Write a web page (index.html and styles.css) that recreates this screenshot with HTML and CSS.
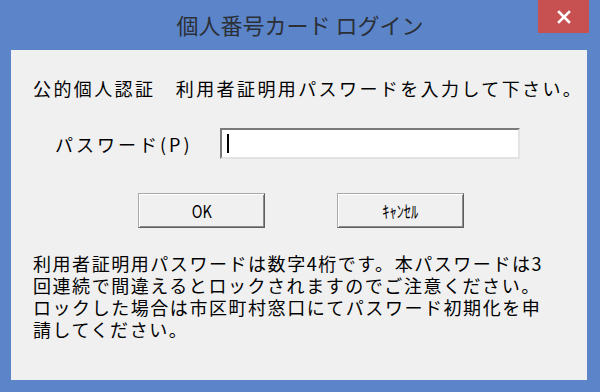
FILE: index.html
```html
<!DOCTYPE html>
<html lang="ja">
<head>
<meta charset="utf-8">
<link rel="stylesheet" href="styles.css">
</head>
<body>
<div class="window">
  <div class="titlebar">
    <div class="title">個人番号カード ログイン</div>
    <div class="close">
      <svg width="14" height="14" viewBox="0 0 14 14"><path d="M2 2 L12 12 M12 2 L2 12" stroke="#fff" stroke-width="2.6" stroke-linecap="square"/></svg>
    </div>
  </div>
  <div class="content">
    <p class="lead">公的個人認証　利用者証明用パスワードを入力して下さい。</p>
    <div class="pwrow">
      <span class="label">パスワード(P)</span>
      <div class="input"><span class="caret"></span></div>
    </div>
    <div class="buttons">
      <div class="btn"><span class="btn-text">OK</span></div>
      <div class="btn"><span class="btn-text">ｷｬﾝｾﾙ</span></div>
    </div>
    <p class="note">利用者証明用パスワードは数字4桁です。本パスワードは3<br>回連続で間違えるとロックされますのでご注意ください。<br>ロックした場合は市区町村窓口にてパスワード初期化を申<br>請してください。</p>
  </div>
</div>
</body>
</html>
```
FILE: styles.css
```css
html, body {
  margin: 0;
  padding: 0;
}
body {
  width: 600px;
  height: 392px;
  background: #5b84c9;
  overflow: hidden;
  font-family: "Noto Sans CJK JP", "Noto Sans", sans-serif;
  color: #000;
}
.window {
  display: flex;
  flex-direction: column;
  height: 392px;
}
.titlebar {
  position: relative;
  height: 50px;
  display: flex;
  align-items: center;
  justify-content: center;
}
.title {
  font-size: 22px;
  color: #2b2f36;
  letter-spacing: 0;
  margin-top: -2px;
}
.close {
  position: absolute;
  top: 0;
  right: 11px;
  width: 51px;
  height: 33px;
  background: #c75050;
  display: flex;
  align-items: center;
  justify-content: center;
}
.content {
  margin: 0 13px 0 11px;
  height: 330px;
  background: #f0f0f0;
  box-sizing: border-box;
  padding: 26px 0 0 22px;
  font-size: 18px;
}
.lead {
  margin: 0;
  line-height: 24px;
  letter-spacing: 2.4px;
}
.pwrow {
  display: flex;
  align-items: center;
  margin-top: 28px;
  padding-left: 22px;
}
.label {
  width: 165px;
  letter-spacing: 3px;
}
.input {
  width: 291px;
  height: 27px;
  background: #fff;
  border-top: 2px solid #7a7a7a;
  border-left: 2px solid #7a7a7a;
  border-right: 2px solid #e3e3e3;
  border-bottom: 2px solid #e3e3e3;
  display: flex;
  align-items: center;
  padding-left: 5px;
  box-sizing: content-box;
}
.caret {
  width: 2px;
  height: 19px;
  background: #000;
}
.buttons {
  display: flex;
  margin-top: 34px;
  padding-left: 105px;
  gap: 72px;
}
.btn {
  width: 127px;
  height: 35px;
  box-sizing: border-box;
  background: #f0f0f0;
  border: 1px solid #a9a9a9;
  border-right-color: #5e5e5e;
  border-bottom-color: #5e5e5e;
  box-shadow: inset 1px 1px 0 #fff, inset -1px -1px 0 #8c8c8c;
  display: flex;
  align-items: center;
  justify-content: center;
}
.btn-text {
  display: inline-block;
  font-size: 17px;
  transform: scaleX(0.85);
}
.note {
  margin: 24px 0 0 0;
  line-height: 22px;
  font-size: 18px;
  letter-spacing: 1.55px;
}
```
